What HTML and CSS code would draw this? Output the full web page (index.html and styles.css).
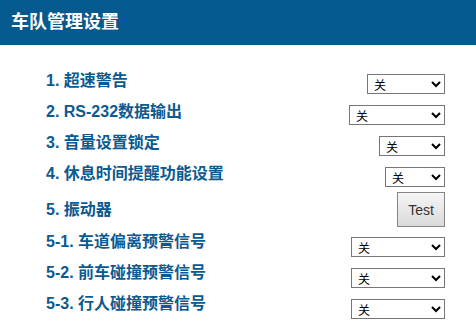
FILE: index.html
```html
<!DOCTYPE html>
<html lang="zh-CN">
<head>
<meta charset="UTF-8">
<title>车队管理设置</title>
<link rel="stylesheet" href="styles.css">
</head>
<body>
	<div class="title">车队管理设置</div>
	<div class="list">
		<div class="row">
			<span class="label">1. 超速警告</span>
			<select class="sel w78"><option>关</option><option>开</option></select>
		</div>
		<div class="row">
			<span class="label">2. RS-232数据输出</span>
			<select class="sel w96"><option>关</option><option>开</option></select>
		</div>
		<div class="row">
			<span class="label">3. 音量设置锁定</span>
			<select class="sel w66"><option>关</option><option>开</option></select>
		</div>
		<div class="row">
			<span class="label">4. 休息时间提醒功能设置</span>
			<select class="sel w60"><option>关</option><option>开</option></select>
		</div>
		<div class="row row-btn">
			<span class="label">5. 振动器</span>
			<button class="btn" type="button">Test</button>
		</div>
		<div class="row row-sub">
			<span class="label">5-1. 车道偏离预警信号</span>
			<select class="sel w94"><option>关</option><option>开</option></select>
		</div>
		<div class="row row-sub">
			<span class="label">5-2. 前车碰撞预警信号</span>
			<select class="sel w94"><option>关</option><option>开</option></select>
		</div>
		<div class="row row-sub">
			<span class="label">5-3. 行人碰撞预警信号</span>
			<select class="sel w94"><option>关</option><option>开</option></select>
		</div>
	</div>
</body>
</html>
```

FILE: styles.css
```css
* { padding: 0; margin: 0; }
body { background: #fff; font-family: "Liberation Sans", "Noto Sans CJK SC", sans-serif; }

.title { height: 45px; line-height: 45px; padding-left: 11px; background: #04598f; color: #fff; font-size: 18px; font-weight: bold; }

.list { padding: 26px 31px 0 46px; }
.row { display: flex; justify-content: space-between; align-items: flex-start; height: 31px; }
.label { font-size: 16px; line-height: 18px; padding-top: 1px; font-weight: bold; color: #0b5a90; }

.sel { height: 20px; margin-top: 3px; padding: 0 0 0 2px; font-family: "Noto Sans CJK SC", sans-serif; font-size: 12px; color: #000; background: #fff; border: 1px solid #767676; }
.w60 { width: 60px; }
.w66 { width: 66px; }
.w78 { width: 78px; }
.w94 { width: 94px; }
.w96 { width: 96px; }

.row-btn { height: 38px; }
.row-btn .label { padding-top: 6px; }
.btn { width: 48px; height: 35px; margin-top: -3px; font-family: "Liberation Sans", sans-serif; font-size: 14px; color: #333; border: 1px solid #858585; background: linear-gradient(#f5f5f5, #dadada); }

.row-sub .label { padding-top: 0; }
.row-sub .sel { margin-top: 4px; }
```
